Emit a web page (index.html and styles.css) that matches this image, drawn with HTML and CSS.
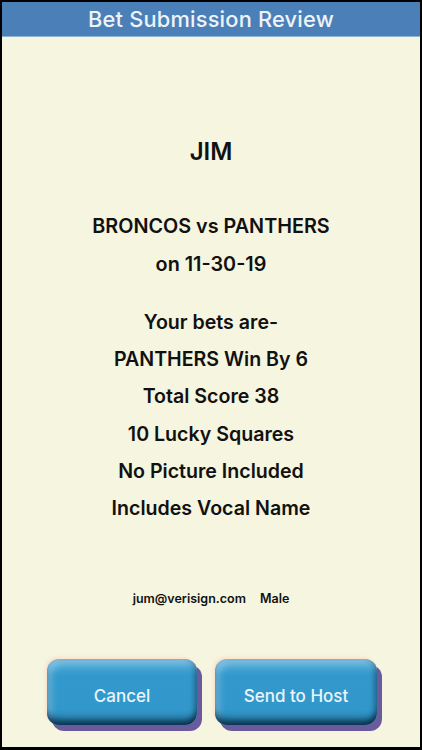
FILE: index.html
```html
<!DOCTYPE html>
<html>
<head>
<meta charset="utf-8">
<link rel="stylesheet" href="styles.css">
</head>
<body>
<div class="frame">
  <header class="topbar">Bet Submission Review</header>
  <main class="content">
    <div class="name">JIM</div>
    <div class="game">
      <div>BRONCOS vs PANTHERS</div>
      <div>on 11-30-19</div>
    </div>
    <div class="bets">
      <div>Your bets are-</div>
      <div>PANTHERS Win By 6</div>
      <div>Total Score 38</div>
      <div>10 Lucky Squares</div>
      <div>No Picture Included</div>
      <div>Includes Vocal Name</div>
    </div>
    <div class="meta"><span>jum@verisign.com</span><span>Male</span></div>
    <div class="actions">
      <button class="btn btn-cancel">Cancel</button>
      <button class="btn btn-send">Send to Host</button>
    </div>
  </main>
</div>
</body>
</html>
```
FILE: styles.css
```css
html, body {
  margin: 0;
  padding: 0;
  background: #000;
}
.frame {
  width: 418px;
  height: 745px;
  border-style: solid;
  border-color: #000;
  border-width: 2px 2px 3px 2px;
  background: #f5f5e0;
  display: flex;
  flex-direction: column;
  font-family: "Inter", "Liberation Sans", sans-serif;
  color: #111;
}
.topbar {
  height: 34px;
  background: #4a80b7;
  border-bottom: 1px solid #8fb3d3;
  color: #eef3f8;
  font-size: 21.8px;
  font-weight: 500;
  display: flex;
  align-items: center;
  justify-content: center;
  letter-spacing: 0.2px;
}
.content {
  flex: 1;
  display: flex;
  flex-direction: column;
  align-items: center;
  text-align: center;
  padding-top: 100px;
}
.name {
  font-size: 24px;
  font-weight: 600;
  line-height: 30px;
}
.game {
  margin-top: 40px;
  font-size: 19.8px;
  font-weight: 600;
  line-height: 38px;
}
.bets {
  margin-top: 21px;
  font-size: 19.6px;
  font-weight: 600;
  line-height: 37.2px;
}
.meta {
  margin-top: 64px;
  font-size: 12.5px;
  font-weight: 600;
  line-height: 16px;
  display: flex;
  gap: 14px;
}
.actions {
  margin-top: 52px;
  align-self: stretch;
  display: flex;
  padding-left: 45px;
  gap: 18px;
}
.btn {
  height: 66px;
  border: none;
  border-radius: 12px;
  font-family: "Inter", "Liberation Sans", sans-serif;
  font-size: 17px;
  font-weight: 500;
  color: #eaf5fb;
  padding: 8px 0 0 0;
  background: linear-gradient(180deg, #55aedb 0%, #3399cc 25%, #3298cb 75%, #2a86b6 100%);
  box-shadow:
    inset 0 -8px 7px -3px rgba(0, 25, 45, 0.75),
    inset 4px 5px 7px rgba(255, 255, 255, 0.3),
    inset -3px 0 5px rgba(0, 40, 70, 0.35),
    5px 6px 0 #6a5a9e,
    -2px -2px 3px #fbe2cc;
}
.btn-cancel { width: 150px; }
.btn-send { width: 162px; }
```
